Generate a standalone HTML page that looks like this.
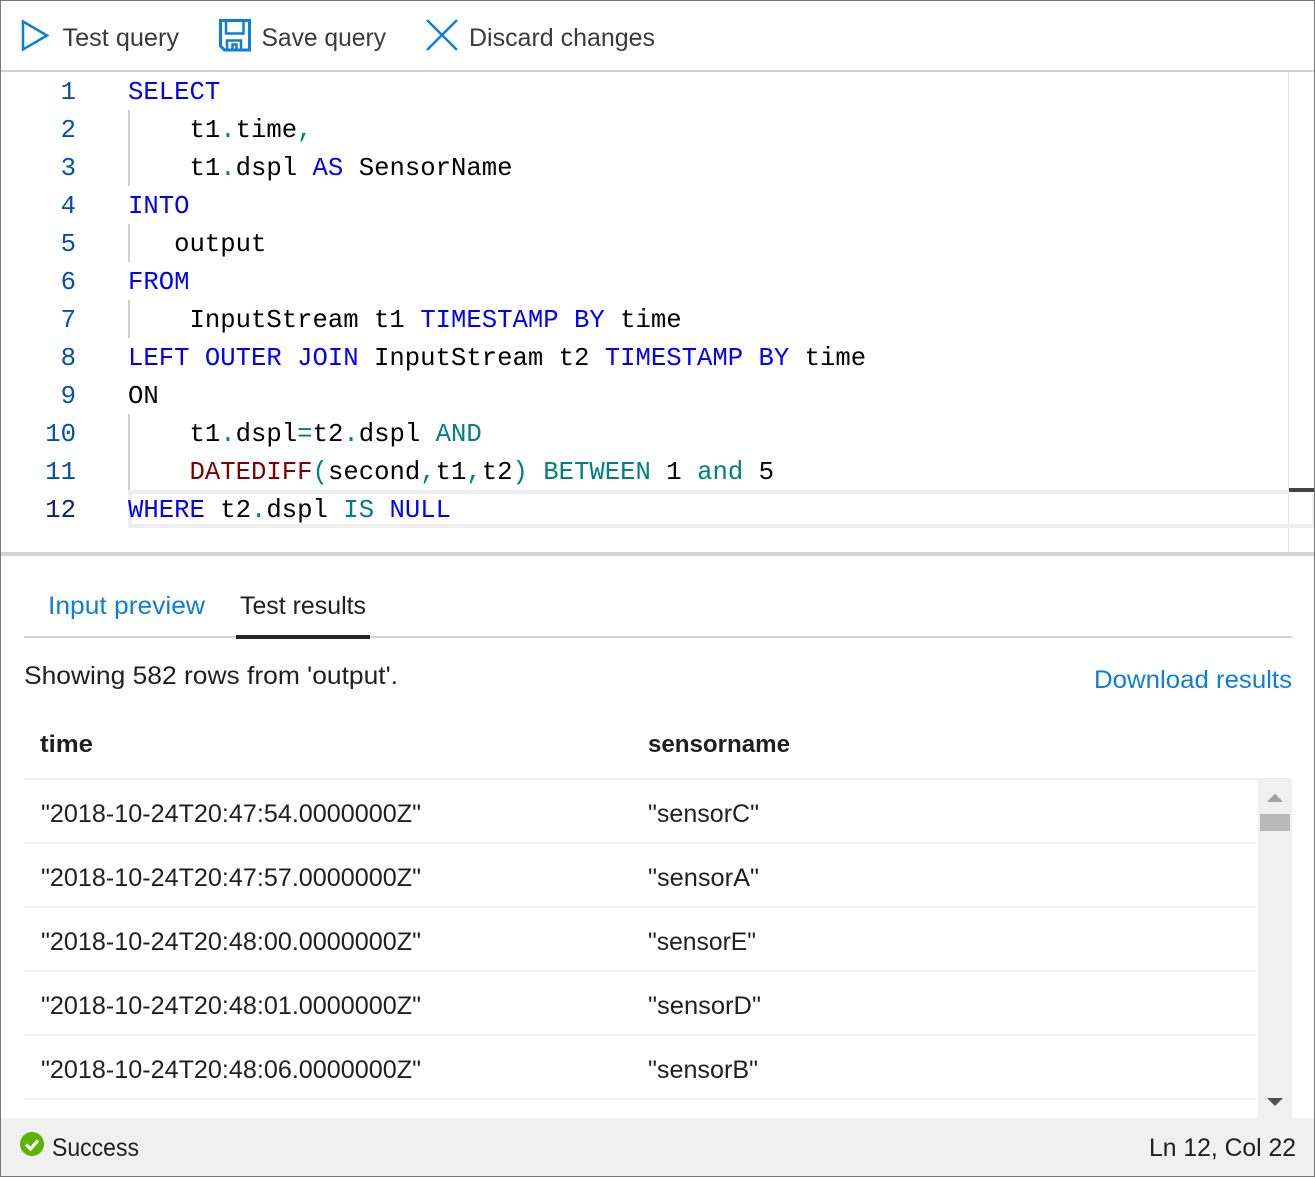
<!DOCTYPE html>
<html lang="en">
<head>
<meta charset="utf-8">
<title>Query editor</title>
<style>
html,body{margin:0;padding:0;background:#fff;}
body{width:1315px;height:1177px;overflow:hidden;}
svg{display:block;}
text{white-space:pre;}
.ui{font-family:"Liberation Sans",sans-serif;font-size:25px;fill:#1f1f1f;}
.tb{fill:#3a3a3a;}
.link{fill:#0f7ed8;}
.b{font-weight:bold;font-size:24.5px;}
.code{font-family:"Liberation Mono",monospace;font-size:25.63px;fill:#000;}
.num{font-family:"Liberation Mono",monospace;font-size:25.63px;fill:#0451a5;text-anchor:end;}
.k{fill:#0000ff;}
.t{fill:#008080;}
.f{fill:#800000;}
</style>
</head>
<body>
<svg width="1315" height="1177" viewBox="0 0 1315 1177" xmlns="http://www.w3.org/2000/svg">
<rect width="1315" height="1177" fill="#fff"/>

<!-- Toolbar -->
<path d="M23 21.500L47 35.500L23 49.500Z" fill="none" stroke="#0f7ed8" stroke-width="2.500"/>
<text class="ui tb" x="62.500" y="46" textLength="116.500" lengthAdjust="spacingAndGlyphs">Test query</text>
<path d="M220.500 20.500H249.500V50H224.500L220.500 46Z" fill="none" stroke="#0f7ed8" stroke-width="3"/>
<path d="M226 21V33.500H243.500V21M227 50V40.500H241V50M232.500 50V44.500H236.500V50" fill="none" stroke="#0f7ed8" stroke-width="2.500"/>
<text class="ui tb" x="261.500" y="46" textLength="124.500" lengthAdjust="spacingAndGlyphs">Save query</text>
<path d="M427 20L457 50M457 20L427 50" fill="none" stroke="#0f7ed8" stroke-width="2.500"/>
<text class="ui tb" x="469" y="46" textLength="186" lengthAdjust="spacingAndGlyphs">Discard changes</text>
<rect x="0" y="70" width="1315" height="2" fill="#d2d2d2"/>

<!-- Editor chrome -->
<rect x="1288" y="72" width="1" height="480" fill="#e2e2e2"/>
<rect x="128" y="110" width="2" height="76" fill="#d0d0d0"/>
<rect x="128" y="224" width="2" height="38" fill="#d0d0d0"/>
<rect x="128" y="300" width="2" height="38" fill="#d0d0d0"/>
<rect x="128" y="414" width="2" height="76" fill="#d0d0d0"/>
<rect x="128" y="490" width="1161" height="4" fill="#eeeeee"/>
<rect x="128" y="524" width="1186" height="4" fill="#eeeeee"/>
<rect x="128" y="490" width="4" height="38" fill="#eeeeee"/>
<rect x="1312" y="494" width="2" height="30" fill="#eeeeee"/>
<rect x="1289" y="488" width="25" height="4" fill="#444444"/>

<!-- Line numbers -->
<text class="num" x="76" y="99">1</text>
<text class="num" x="76" y="137">2</text>
<text class="num" x="76" y="175">3</text>
<text class="num" x="76" y="213">4</text>
<text class="num" x="76" y="251">5</text>
<text class="num" x="76" y="289">6</text>
<text class="num" x="76" y="327">7</text>
<text class="num" x="76" y="365">8</text>
<text class="num" x="76" y="403">9</text>
<text class="num" x="76" y="441">10</text>
<text class="num" x="76" y="479">11</text>
<text class="num" x="76" y="517" style="fill:#0b216f">12</text>

<!-- Code -->
<text class="code" x="128" y="99"><tspan class="k">SELECT</tspan></text>
<text class="code" x="128" y="137">    t1<tspan class="t">.</tspan>time<tspan class="t">,</tspan></text>
<text class="code" x="128" y="175">    t1<tspan class="t">.</tspan>dspl <tspan class="k">AS</tspan> SensorName</text>
<text class="code" x="128" y="213"><tspan class="k">INTO</tspan></text>
<text class="code" x="128" y="251">   output</text>
<text class="code" x="128" y="289"><tspan class="k">FROM</tspan></text>
<text class="code" x="128" y="327">    InputStream t1 <tspan class="k">TIMESTAMP BY</tspan> time</text>
<text class="code" x="128" y="365"><tspan class="k">LEFT OUTER JOIN</tspan> InputStream t2 <tspan class="k">TIMESTAMP BY</tspan> time</text>
<text class="code" x="128" y="403">ON</text>
<text class="code" x="128" y="441">    t1<tspan class="t">.</tspan>dspl<tspan class="t">=</tspan>t2<tspan class="t">.</tspan>dspl <tspan class="t">AND</tspan></text>
<text class="code" x="128" y="479">    <tspan class="f">DATEDIFF</tspan><tspan class="t">(</tspan>second<tspan class="t">,</tspan>t1<tspan class="t">,</tspan>t2<tspan class="t">) BETWEEN</tspan> 1 <tspan class="t">and</tspan> 5</text>
<text class="code" x="128" y="517"><tspan class="k">WHERE</tspan> t2<tspan class="t">.</tspan>dspl <tspan class="t">IS</tspan> <tspan class="k">NULL</tspan></text>

<!-- Divider -->
<rect x="0" y="552" width="1315" height="4" fill="#d4d4d4"/>

<!-- Tabs -->
<text class="ui link" x="48" y="614" textLength="157" lengthAdjust="spacingAndGlyphs">Input preview</text>
<text class="ui" x="240" y="614" textLength="126" lengthAdjust="spacingAndGlyphs">Test results</text>
<rect x="24" y="636" width="1268" height="2" fill="#d2d2d2"/>
<rect x="236" y="635" width="134" height="4" fill="#262626"/>

<text class="ui" x="24" y="684" textLength="374" lengthAdjust="spacingAndGlyphs">Showing 582 rows from 'output'.</text>
<text class="ui link" x="1094" y="688" textLength="198" lengthAdjust="spacingAndGlyphs">Download results</text>

<!-- Table -->
<text class="ui b" x="40" y="752" textLength="53" lengthAdjust="spacingAndGlyphs">time</text>
<text class="ui b" x="648" y="752" textLength="142" lengthAdjust="spacingAndGlyphs">sensorname</text>
<rect x="24" y="778" width="1266" height="2" fill="#eeeeee"/>

<text class="ui" x="41" y="822" textLength="380" lengthAdjust="spacingAndGlyphs">"2018-10-24T20:47:54.0000000Z"</text>
<text class="ui" x="648" y="822" textLength="111" lengthAdjust="spacingAndGlyphs">"sensorC"</text>
<rect x="24" y="842" width="1232" height="2" fill="#f1f1f1"/>
<text class="ui" x="41" y="886" textLength="380" lengthAdjust="spacingAndGlyphs">"2018-10-24T20:47:57.0000000Z"</text>
<text class="ui" x="648" y="886" textLength="111" lengthAdjust="spacingAndGlyphs">"sensorA"</text>
<rect x="24" y="906" width="1232" height="2" fill="#f1f1f1"/>
<text class="ui" x="41" y="950" textLength="380" lengthAdjust="spacingAndGlyphs">"2018-10-24T20:48:00.0000000Z"</text>
<text class="ui" x="648" y="950" textLength="108" lengthAdjust="spacingAndGlyphs">"sensorE"</text>
<rect x="24" y="970" width="1232" height="2" fill="#f1f1f1"/>
<text class="ui" x="41" y="1014" textLength="380" lengthAdjust="spacingAndGlyphs">"2018-10-24T20:48:01.0000000Z"</text>
<text class="ui" x="648" y="1014" textLength="113" lengthAdjust="spacingAndGlyphs">"sensorD"</text>
<rect x="24" y="1034" width="1232" height="2" fill="#f1f1f1"/>
<text class="ui" x="41" y="1078" textLength="380" lengthAdjust="spacingAndGlyphs">"2018-10-24T20:48:06.0000000Z"</text>
<text class="ui" x="648" y="1078" textLength="110" lengthAdjust="spacingAndGlyphs">"sensorB"</text>
<rect x="24" y="1098" width="1232" height="2" fill="#f1f1f1"/>

<!-- Scrollbar -->
<rect x="1258" y="780" width="34" height="338" fill="#f0f0f0"/>
<path d="M1267 802L1275 793.500L1283 802Z" fill="#a3a3a3"/>
<rect x="1260" y="814" width="30" height="17" fill="#b9b9b9"/>
<path d="M1267 1098H1283L1275 1106Z" fill="#505050"/>

<!-- Status bar -->
<rect x="0" y="1118" width="1315" height="59" fill="#f0f0f0"/>
<circle cx="32" cy="1144" r="12" fill="#5db300"/>
<path d="M26 1144.500L30.500 1149L38 1140.500" fill="none" stroke="#fff" stroke-width="3.200"/>
<text class="ui" x="52" y="1156" textLength="87" lengthAdjust="spacingAndGlyphs">Success</text>
<text class="ui" x="1149" y="1156" textLength="147" lengthAdjust="spacingAndGlyphs">Ln 12, Col 22</text>

<!-- Outer border -->
<rect x="0.500" y="0.500" width="1314" height="1176" fill="none" stroke="#777777" stroke-width="1"/>
</svg>
</body>
</html>
